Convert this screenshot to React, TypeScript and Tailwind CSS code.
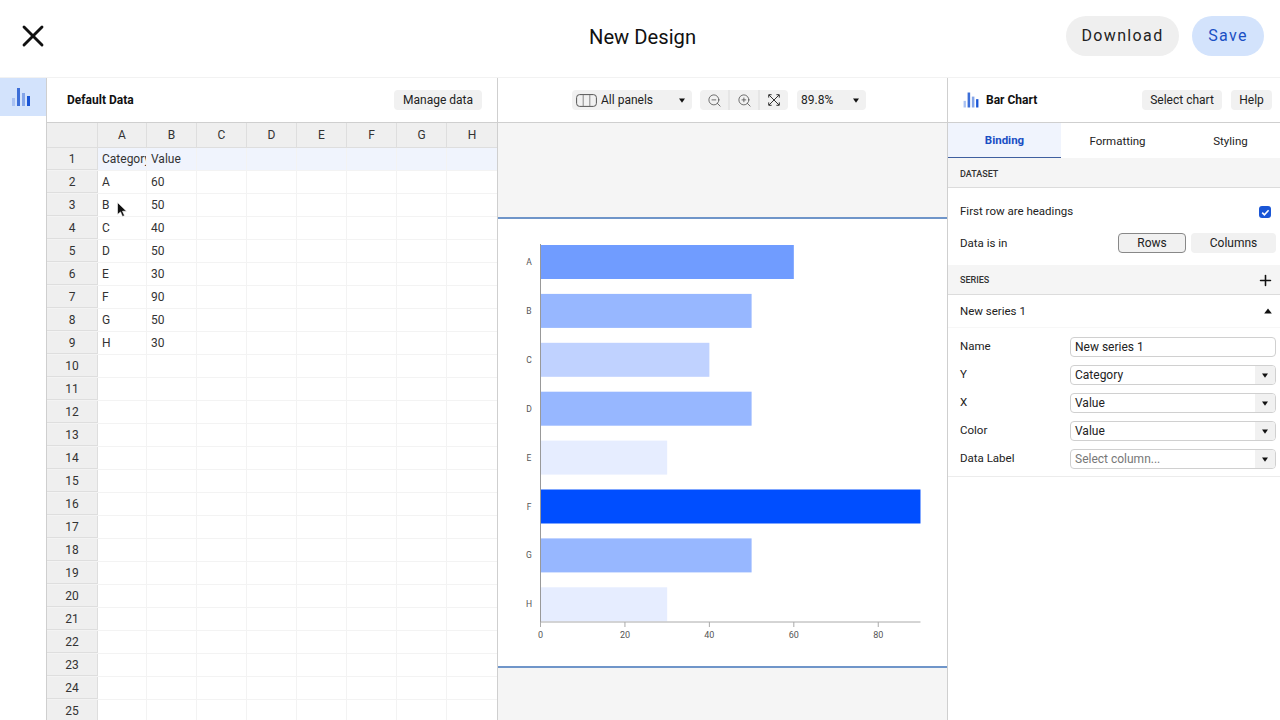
import { Plus, X, ZoomIn, ZoomOut } from 'lucide-react';

const columns = ['A', 'B', 'C', 'D', 'E', 'F', 'G', 'H'];
const rowNumbers = Array.from({ length: 25 }, (_, i) => i + 1);
const data: [string, number][] = [
    ['A', 60],
    ['B', 50],
    ['C', 40],
    ['D', 50],
    ['E', 30],
    ['F', 90],
    ['G', 50],
    ['H', 30],
];

const barColors: Record<number, string> = {
    30: '#e6edff',
    40: '#c0d2ff',
    50: '#97b7ff',
    60: '#709cff',
    90: '#004eff',
};

function Caret({ up = false }: { up?: boolean }) {
    if (up) {
        return (
            <svg width="8" height="6" viewBox="0 0 8 6">
                <path d="M0.2 5.4h7.6L4 0.4z" fill="#111" />
            </svg>
        );
    }
    return (
        <svg width="6" height="5" viewBox="0 0 6 5">
            <path d="M0 0.4h6L3 4.8z" fill="#111" />
        </svg>
    );
}

function ChartGlyph() {
    return (
        <svg width="18" height="18" viewBox="0 0 18 18">
            <rect x="0" y="10" width="3" height="8" fill="#a9c1f2" />
            <rect x="5" y="0" width="3" height="18" fill="#3d6fd8" />
            <rect x="10" y="5" width="3" height="13" fill="#84a5e8" />
            <rect x="15" y="8" width="3" height="10" fill="#1a56d6" />
        </svg>
    );
}

function PanelHeader({ children }: { children: React.ReactNode }) {
    return (
        <div className="h-[45px] shrink-0 flex items-center border-b border-[#cfcfcf]">{children}</div>
    );
}

function ToolButton({ children, className = '' }: { children: React.ReactNode; className?: string }) {
    return (
        <div className={`h-5 flex items-center justify-center rounded bg-[#f1f1f1] text-[#222] ${className}`}>
            {children}
        </div>
    );
}

function Spreadsheet() {
    return (
        <div className="flex-1 overflow-hidden text-[12px] text-[#333]">
            <div className="flex h-[25px] bg-[#efefef] border-b border-[#dedede]">
                <div className="w-[51px] shrink-0 border-r border-[#dedede]" />
                {columns.map((c, i) => (
                    <div
                        key={c}
                        className={`${i === 0 ? 'w-[49px]' : 'w-[50px]'} shrink-0 flex items-center justify-center border-r border-[#dedede] last:border-r-0`}
                    >
                        {c}
                    </div>
                ))}
            </div>
            {rowNumbers.map((n) => (
                <div key={n} className={`flex h-[23px] border-b border-[#f3f3f3] ${n === 1 ? 'bg-[#f0f4fd]' : ''}`}>
                    <div className="w-[51px] shrink-0 flex items-center justify-center bg-[#efefef] border-r border-b border-[#dedede]">
                        {n}
                    </div>
                    {columns.map((c, i) => {
                        let text = '';
                        if (n === 1 && i === 0) text = 'Category';
                        if (n === 1 && i === 1) text = 'Value';
                        if (n > 1 && n <= 9 && i === 0) text = data[n - 2][0];
                        if (n > 1 && n <= 9 && i === 1) text = String(data[n - 2][1]);
                        return (
                            <div
                                key={c}
                                className={`${i === 0 ? 'w-[49px]' : 'w-[50px]'} shrink-0 flex items-center pl-1 overflow-hidden whitespace-nowrap border-r border-[#f3f3f3] last:border-r-0`}
                            >
                                {text}
                            </div>
                        );
                    })}
                </div>
            ))}
        </div>
    );
}

function BarChart() {
    const x0 = 42.5;
    const scale = 4.222;
    const top = 27;
    const pitch = 48.9;
    const barH = 34;
    const axisY = 403;
    return (
        <svg width="449" height="447" viewBox="0 0 449 447" className="block">
            {data.map(([label, value], i) => (
                <g key={label}>
                    <rect x={x0} y={top + i * pitch - 1} width={value * scale} height={barH} fill={barColors[value]} />
                    <text
                        x="31"
                        y={top + i * pitch + 19}
                        textAnchor="middle"
                        fontSize="8.5"
                        fill="#555"
                        fontFamily="Roboto, sans-serif"
                    >
                        {label}
                    </text>
                </g>
            ))}
            <line x1={x0} y1={top - 2} x2={x0} y2={axisY + 4} stroke="#999" strokeWidth="1" />
            <line x1={x0} y1={axisY} x2={x0 + 90 * scale} y2={axisY} stroke="#aaa" strokeWidth="1" />
            {[0, 20, 40, 60, 80].map((t) => (
                <g key={t}>
                    <line x1={x0 + t * scale} y1={axisY} x2={x0 + t * scale} y2={axisY + 5} stroke="#aaa" />
                    <text
                        x={x0 + t * scale}
                        y={axisY + 16}
                        textAnchor="middle"
                        fontSize="9"
                        fill="#555"
                        fontFamily="Roboto, sans-serif"
                    >
                        {t}
                    </text>
                </g>
            ))}
        </svg>
    );
}

function SectionTitle({ title, textClass, action }: { title: string; textClass: string; action?: React.ReactNode }) {
    return (
        <div className="h-[30px] shrink-0 flex items-center justify-between pl-3 pr-[6px] pt-px bg-[#f5f5f5] border-b border-[#dcdcdc] text-[9px] font-medium text-[#333]">
            <span className={textClass}>{title}</span>
            {action}
        </div>
    );
}

function SelectField({ label, value, placeholder = false }: { label: string; value: string; placeholder?: boolean }) {
    return (
        <div className="flex items-center h-5">
            <span className="w-[110px] text-[#222]">{label}</span>
            <div className="w-[206px] h-5 flex rounded border border-[#d0d0d0] overflow-hidden text-[12px]">
                <span className={`flex-1 pl-1 leading-[19px] ${placeholder ? 'text-[#777]' : 'text-[#222]'}`}>{value}</span>
                <span className="w-5 flex items-center justify-center bg-[#f1f1f1]">
                    <Caret />
                </span>
            </div>
        </div>
    );
}

export default function App() {
    return (
        <div className="relative w-[1280px] h-[720px] overflow-hidden bg-white font-['Roboto',sans-serif]">
            {/* Top bar */}
            <div className="relative h-[78px] flex items-center justify-between pl-[22px] pr-4 border-b border-[#f2f2f2]">
                <X size={36} strokeWidth={1.9} className="text-[#111] -ml-[7px] -mt-[6px]" />
                <h1 className="absolute left-[589px] top-[23px] text-[20.2px] leading-[28px] text-[#111]">New Design</h1>
                <div className="flex gap-[13px] -mt-[5px]">
                    <button className="w-[113px] h-[40px] rounded-full bg-[#efefef] text-[16px] tracking-[1.35px] text-[#222]">
                        Download
                    </button>
                    <button className="w-[72px] h-[40px] rounded-full bg-[#d3e3fc] text-[16px] tracking-[1.35px] text-[#1a4fc4]">
                        Save
                    </button>
                </div>
            </div>

            <div className="flex h-[642px]">
                {/* Icon rail */}
                <div className="w-[47px] shrink-0 border-r border-[#cfcfcf]">
                    <div className="h-[38px] flex items-center justify-center pr-[4px] bg-[#d3e3fc]">
                        <ChartGlyph />
                    </div>
                </div>

                {/* Data panel */}
                <div className="w-[451px] shrink-0 flex flex-col border-r border-[#cfcfcf]">
                    <PanelHeader>
                        <span className="ml-5 text-[12px] font-bold text-[#111]">Default Data</span>
                        <ToolButton className="ml-auto mr-[15px] w-[88px] text-[12px]">Manage data</ToolButton>
                    </PanelHeader>
                    <Spreadsheet />
                </div>

                {/* Preview */}
                <div className="w-[450px] shrink-0 flex flex-col border-r border-[#cfcfcf]">
                    <PanelHeader>
                        <div className="ml-[74px] flex items-center text-[12px]">
                            <ToolButton className="w-[120px] !justify-start pl-1 gap-1">
                                <svg width="21" height="13" viewBox="0 0 21 13">
                                    <rect x="0.6" y="0.6" width="19.8" height="11.8" rx="3" fill="none" stroke="#555" />
                                    <path d="M7.2 1v11M13.8 1v11" stroke="#888" />
                                </svg>
                                <span>All panels</span>
                                <span className="ml-auto mr-[7px]">
                                    <Caret />
                                </span>
                            </ToolButton>
                            <div className="ml-2 w-[88px] h-5 flex rounded bg-[#f1f1f1] text-[#444]">
                                <span className="flex-1 flex items-center justify-center border-r-2 border-[#e6e6e6]">
                                    <ZoomOut size={15} strokeWidth={1.2} />
                                </span>
                                <span className="flex-1 flex items-center justify-center border-r-2 border-[#e6e6e6]">
                                    <ZoomIn size={15} strokeWidth={1.2} />
                                </span>
                                <span className="flex-1 flex items-center justify-center">
                                    <svg width="12" height="12" viewBox="0 0 12 12" fill="none" stroke="#333" strokeWidth="1">
                                        <path d="M1 1l10 10M11 1L1 11M0.7 3.6V0.7h2.9M8.4 0.7h2.9v2.9M0.7 8.4v2.9h2.9M11.3 8.4v2.9H8.4" />
                                    </svg>
                                </span>
                            </div>
                            <ToolButton className="ml-[9px] w-[69px] !justify-start pl-1">
                                <span>89.8%</span>
                                <span className="ml-auto mr-[7px]">
                                    <Caret />
                                </span>
                            </ToolButton>
                        </div>
                    </PanelHeader>
                    <div className="flex-1 bg-[#f5f5f5] flex flex-col overflow-hidden">
                        <div className="h-[94px] shrink-0" />
                        <div className="h-[451px] shrink-0 bg-white border-y-2 border-[#6f95c9]">
                            <BarChart />
                        </div>
                    </div>
                </div>

                {/* Settings */}
                <div className="flex-1 min-w-0 flex flex-col text-[11.5px] text-[#222]">
                    <PanelHeader>
                        <span className="ml-[14px] scale-[0.85]">
                            <ChartGlyph />
                        </span>
                        <span className="ml-[6px] text-[12px] font-bold text-[#111]">Bar Chart</span>
                        <ToolButton className="ml-auto w-[80px] text-[12px]">Select chart</ToolButton>
                        <ToolButton className="ml-[9px] mr-2 w-[41px] text-[12px]">Help</ToolButton>
                    </PanelHeader>
                    <div className="h-[35px] shrink-0 flex">
                        <div className="w-[113px] shrink-0 flex items-center justify-center pt-[2px] bg-[#f0f4fd] border-b-[1.5px] border-[#3f5f9f] font-bold text-[#1a4fc4]">
                            Binding
                        </div>
                        <div className="w-[113px] shrink-0 flex items-center justify-center pt-[2px]">Formatting</div>
                        <div className="w-[113px] shrink-0 flex items-center justify-center pt-[2px]">Styling</div>
                    </div>
                    <SectionTitle title="DATASET" textClass="pt-[3px]" />
                    <div className="h-[77px] shrink-0 pl-3 pr-1 pt-[13px]">
                        <div className="flex items-center justify-between h-5">
                            <span className="pt-[2px]">First row are headings</span>
                            <span className="mr-[5px] mt-[2px] w-3 h-3 rounded-[3px] bg-[#1a56d6] flex items-center justify-center">
                                <svg width="9" height="9" viewBox="0 0 9 9" fill="none" stroke="white" strokeWidth="1.6">
                                    <path d="M1.2 4.6l2.2 2.2 4.2-4.6" />
                                </svg>
                            </span>
                        </div>
                        <div className="flex items-center h-5 mt-3">
                            <span className="pt-[2px]">Data is in</span>
                            <div className="ml-auto w-[68px] h-5 flex items-center justify-center rounded bg-[#f1f1f1] border border-[#888] text-[12px]">
                                Rows
                            </div>
                            <div className="ml-[5px] w-[85px] h-5 flex items-center justify-center rounded bg-[#f1f1f1] text-[12px]">
                                Columns
                            </div>
                        </div>
                    </div>
                    <SectionTitle
                        title="SERIES"
                        textClass="pt-[2px]"
                        action={<Plus size={17} strokeWidth={2.2} className="text-[#111]" />}
                    />
                    <div className="h-[33px] shrink-0 flex items-center justify-between pl-3 pr-2 border-b border-[#f7f7f7]">
                        <span className="pt-[2px]">New series 1</span>
                        <Caret up />
                    </div>
                    <div className="flex flex-col gap-2 pl-3 pr-1 pt-[9px] pb-[7px] border-b border-[#ececec]">
                        <div className="flex items-center h-5">
                            <span className="w-[110px]">Name</span>
                            <div className="w-[206px] h-5 rounded border border-[#d0d0d0] pl-1 leading-[18px] text-[12px]">New series 1</div>
                        </div>
                        <SelectField label="Y" value="Category" />
                        <SelectField label="X" value="Value" />
                        <SelectField label="Color" value="Value" />
                        <SelectField label="Data Label" value="Select column..." placeholder />
                    </div>
                </div>
            </div>

            {/* Mouse pointer */}
            <svg width="11" height="16" viewBox="0 0 11 16" className="absolute left-[117px] top-[202px]">
                <path d="M0.5 0.5v12l3-2.6 2 4.6 2-.9-2-4.4h4z" fill="#111" stroke="#fff" strokeWidth="0.6" />
            </svg>
        </div>
    );
}
